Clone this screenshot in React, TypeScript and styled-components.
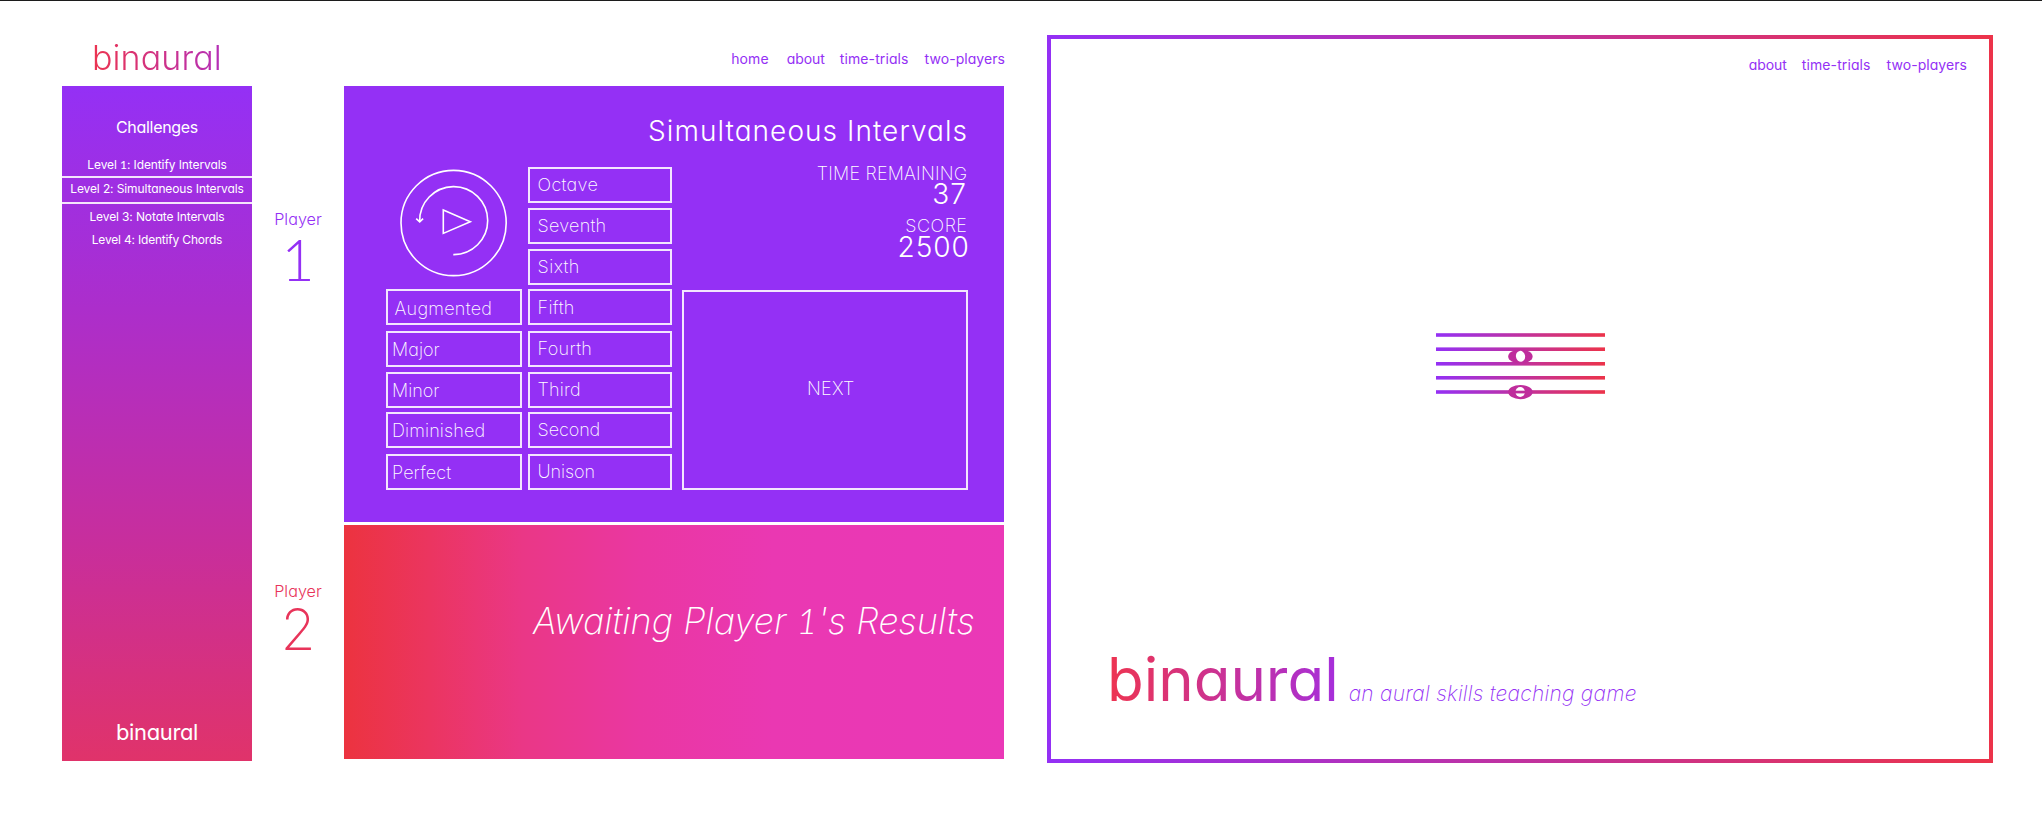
import React from "react";
import styled, { createGlobalStyle, css } from "styled-components";

const violet = "#9430f5";
const red = "#ec334a";
const line = "rgba(255, 255, 255, 0.88)";

const GlobalStyle = createGlobalStyle`
  *, *::before, *::after { box-sizing: border-box; }
  body {
    margin: 0;
    background: #fff;
    font-family: Inter, "Open Sans", sans-serif;
    font-feature-settings: "cv11";
  }
  button { font: inherit; color: inherit; background: none; margin: 0; }
`;

const Page = styled.div`
  display: flex;
  align-items: flex-start;
  width: 2042px;
  height: 822px;
  border-top: 1px solid #1c1c1c;
  padding: 34px 49px 0 62px;
  overflow: hidden;
`;

/* text */

interface TypeProps {
  $size: number;
  $line: number;
  $weight?: number;
  $track?: number;
}

const type = css<TypeProps>`
  font-size: ${(p) => p.$size}px;
  line-height: ${(p) => p.$line}px;
  font-weight: ${(p) => p.$weight ?? 400};
  letter-spacing: ${(p) => p.$track ?? 0}px;
  white-space: nowrap;
`;

const gradientText = css`
  background-clip: text;
  -webkit-background-clip: text;
  color: transparent;
`;

/* a lighter face whose "1" has a foot */
const FootedOne = styled.span`
  font-family: Lato, sans-serif;
  font-weight: ${(p: { $weight?: number }) => p.$weight ?? 300};
  line-height: 1;
`;

/* game screen */

const Game = styled.section`
  display: flex;
  width: 943px;
`;

const Side = styled.div`
  width: 190px;
  padding-top: 3px;
`;

const Logo = styled.h1<TypeProps>`
  ${type}
  margin: 0 0 8px 30px;
  width: fit-content;
  background-image: linear-gradient(90deg, #ec3450, #b42fb8);
  ${gradientText}
`;

const Sidebar = styled.aside`
  display: flex;
  flex-direction: column;
  height: 675px;
  padding: 31px 0 16px;
  color: #fff;
  text-align: center;
  background: linear-gradient(180deg, ${violet} 0%, #ac2ecb 33%, #c82e9c 68%, #e0336a 100%);
`;

const SidebarTitle = styled.h2<TypeProps>`
  ${type}
  margin: 0 0 20px;
`;

const Levels = styled.ul`
  list-style: none;
  margin: 0;
  padding: 0;
`;

const Level = styled.li<{ $active?: boolean; $track: number }>`
  font-size: 12px;
  line-height: 15px;
  letter-spacing: ${(p) => p.$track}px;
  white-space: nowrap;
  padding: 0 0 8px;
  ${(p) =>
    p.$active &&
    css`
      border: solid ${line};
      border-width: 2px 0;
      margin: -4px 0 5px;
      padding: 3px 0 6px;
    `}
`;

const SidebarBrand = styled.div<TypeProps>`
  ${type}
  margin-top: auto;
`;

const Players = styled.div`
  display: flex;
  flex-direction: column;
  align-items: center;
  width: 92px;
  padding-top: 174px;
`;

const Player = styled.div<{ $color: string; $gap: number }>`
  display: flex;
  flex-direction: column;
  align-items: center;
  height: 372px;
  color: ${(p) => p.$color};
  gap: ${(p) => p.$gap}px;
`;

const PlayerLabel = styled.span<TypeProps>`
  ${type}
`;

const PlayerNumber = styled.span<{ $face: string; $weight: number }>`
  font-family: ${(p) => p.$face}, sans-serif;
  font-size: 57px;
  line-height: 52px;
  font-weight: ${(p) => p.$weight};
`;

const Main = styled.main`
  width: 660px;
  padding-top: 15px;
`;

const Nav = styled.nav<{ $outset?: number }>`
  display: flex;
  justify-content: flex-end;
  margin-right: ${(p) => -(p.$outset ?? 0)}px;
  color: ${violet};
`;

const NavLink = styled.a<{ $before: number; $track: number }>`
  font-size: 14px;
  line-height: 17px;
  font-weight: 400;
  letter-spacing: ${(p) => p.$track}px;
  margin-left: ${(p) => p.$before}px;
`;

const Board = styled.div`
  height: 436px;
  margin-top: 19px;
  padding: 28px 36px 0 42px;
  color: #fff;
  background: ${violet};
`;

const BoardTitle = styled.h2<TypeProps>`
  ${type}
  margin: 0;
  text-align: right;
`;

const Columns = styled.div`
  display: flex;
  align-items: flex-start;
  margin-top: 19px;
`;

const Column = styled.div<{ $width: number; $after: number }>`
  display: flex;
  flex-direction: column;
  width: ${(p) => p.$width}px;
  margin-right: ${(p) => p.$after}px;
`;

const Replay = styled.svg`
  display: block;
  width: 136px;
  height: 122px;
  fill: none;
  stroke: #fff;
  stroke-width: 1.6;
`;

const Choice = styled.button<{ $after: number; $inset: number; $drop: number; $track: number }>`
  display: flex;
  align-items: flex-start;
  height: 36px;
  margin-bottom: ${(p) => p.$after}px;
  padding: ${(p) => p.$drop}px 0 0 ${(p) => p.$inset}px;
  border: 2px solid ${line};
  font-size: 18px;
  line-height: 21px;
  font-weight: 200;
  letter-spacing: ${(p) => p.$track}px;
`;

const Stats = styled.div`
  display: flex;
  flex-direction: column;
  align-items: flex-end;
  height: 127px;
  margin-top: -4px;
`;

const Stat = styled.span<TypeProps & { $shift: number; $above?: number }>`
  ${type}
  margin-right: ${(p) => p.$shift}px;
  margin-top: ${(p) => p.$above ?? 0}px;
`;

const Next = styled.button<TypeProps>`
  ${type}
  height: 200px;
  width: 286px;
  display: flex;
  border: 2px solid ${line};
  padding: 86px 0 0 123px;
`;

const Waiting = styled.div<TypeProps>`
  ${type}
  width: 660px;
  height: 234px;
  margin-top: 3px;
  padding: 74px 0 0 189px;
  color: #fff;
  font-style: italic;
  background: linear-gradient(90deg, #ec333f 0%, #eb3560 13%, #ea3786 27%, #ea37a2 45%, #ea38b2 65%, #ea38b7 100%);
`;

/* title screen */

const Splash = styled.section`
  display: flex;
  flex-direction: column;
  width: 946px;
  height: 728px;
  margin-left: 42px;
  border: 4px solid;
  border-image: linear-gradient(90deg, ${violet}, ${red}) 1;
  padding: 17px 22px 0 56px;
`;

const Staff = styled.svg`
  display: block;
  width: 169px;
  height: 70px;
  margin: 258px 0 242px 329px;
`;

const Brand = styled.div`
  display: flex;
  align-items: baseline;
`;

const BrandName = styled.h1<TypeProps>`
  ${type}
  margin: 0 10px 0 0;
  background-image: linear-gradient(90deg, #ee3450, #a52fdc);
  ${gradientText}
`;

const Tagline = styled.p<TypeProps>`
  ${type}
  margin: 0;
  font-style: italic;
  color: ${violet};
`;

const intervals = [
  { name: "Octave", after: 5, track: 0.3, drop: 5 },
  { name: "Seventh", after: 5, track: 0.25, drop: 5 },
  { name: "Sixth", after: 4, track: 0.4, drop: 5 },
  { name: "Fifth", after: 6, track: 0.3, drop: 6 },
  { name: "Fourth", after: 5, track: 0.3, drop: 5 },
  { name: "Third", after: 4, track: 0.15, drop: 5 },
  { name: "Second", after: 6, track: -0.1, drop: 5 },
  { name: "Unison", after: 0, track: -0.1, drop: 5 },
];

const qualities = [
  { name: "Augmented", after: 6, track: 0.26, inset: 6.5, drop: 7 },
  { name: "Major", after: 5, track: 0.05, inset: 4, drop: 6 },
  { name: "Minor", after: 4, track: 0, inset: 4, drop: 6 },
  { name: "Diminished", after: 6, track: 0.13, inset: 4, drop: 6 },
  { name: "Perfect", after: 0, track: 0.12, inset: 4, drop: 6 },
];

const staffLines = [2.2, 16.4, 31, 45, 59.2];

function SharedLinks() {
  return (
    <>
      <NavLink $before={18} $track={-0.05}>about</NavLink>
      <NavLink $before={15} $track={0.1}>time-trials</NavLink>
      <NavLink $before={16} $track={0.06}>two-players</NavLink>
    </>
  );
}

export default function App() {
  return (
    <Page>
      <GlobalStyle />
      <Game>
        <Side>
          <Logo $size={34} $line={40} $weight={300} $track={0.1}>binaural</Logo>
          <Sidebar>
            <SidebarTitle $size={16} $line={20} $track={-0.3}>Challenges</SidebarTitle>
            <Levels>
              <Level $track={-0.1}>
                Level <FootedOne $weight={400}>1</FootedOne>: Identify Intervals
              </Level>
              <Level $active $track={-0.11}>Level 2: Simultaneous Intervals</Level>
              <Level $track={-0.12}>Level 3: Notate Intervals</Level>
              <Level $track={-0.19}>Level 4: Identify Chords</Level>
            </Levels>
            <SidebarBrand $size={22} $line={26} $weight={400} $track={-0.35}>binaural</SidebarBrand>
          </Sidebar>
        </Side>

        <Players>
          <Player $color={violet} $gap={4}>
            <PlayerLabel $size={16.2} $line={20} $weight={300}>Player</PlayerLabel>
            <PlayerNumber $face="Lato" $weight={300}>1</PlayerNumber>
          </Player>
          <Player $color="#e8345a" $gap={3}>
            <PlayerLabel $size={16.2} $line={20} $weight={300}>Player</PlayerLabel>
            <PlayerNumber $face="Inter" $weight={200}>2</PlayerNumber>
          </Player>
        </Players>

        <Main>
          <Nav $outset={1}>
            <NavLink $before={0} $track={0.1}>home</NavLink>
            <SharedLinks />
          </Nav>
          <Board>
            <BoardTitle $size={28} $line={34} $weight={300} $track={1.05}>Simultaneous Intervals</BoardTitle>
            <Columns>
              <Column $width={136} $after={6}>
                <Replay viewBox="0 0 136 122">
                  <circle cx="67.6" cy="56" r="52.6" />
                  <path d="M67.3 87.6A34 34 0 1 0 33.7 54.5" />
                  <path d="M30.2 51.6l3.5 3.2 3.4-3.2" />
                  <path d="M57.3 43v23.4l27-11.7z" />
                </Replay>
                {qualities.map((q) => (
                  <Choice key={q.name} $after={q.after} $inset={q.inset} $drop={q.drop} $track={q.track}>
                    {q.name}
                  </Choice>
                ))}
              </Column>
              <Column $width={144} $after={10}>
                {intervals.map((i) => (
                  <Choice key={i.name} $after={i.after} $inset={7.6} $drop={i.drop} $track={i.track}>
                    {i.name}
                  </Choice>
                ))}
              </Column>
              <Column $width={286} $after={0}>
                <Stats>
                  <Stat $size={18} $line={21} $weight={200} $track={0.2} $shift={0.8}>TIME REMAINING</Stat>
                  <Stat $size={28} $line={20} $weight={300} $track={1} $shift={1}>37</Stat>
                  <Stat $size={18} $line={21} $weight={200} $track={0.5} $shift={0.5} $above={11}>SCORE</Stat>
                  <Stat $size={28} $line={20} $weight={300} $track={0.9} $shift={-1.6} $above={1}>2500</Stat>
                </Stats>
                <Next $size={18} $line={21} $weight={200} $track={0.26}>NEXT</Next>
              </Column>
            </Columns>
          </Board>
          <Waiting $size={36} $line={44} $weight={200} $track={0.08}>
            Awaiting Player <FootedOne>1</FootedOne>'s Results
          </Waiting>
        </Main>
      </Game>

      <Splash>
        <Nav>
          <SharedLinks />
        </Nav>
        <Staff viewBox="0 0 169 70">
          <defs>
            <linearGradient id="staff" gradientUnits="userSpaceOnUse" x1="0" y1="0" x2="169" y2="0">
              <stop offset="0" stopColor={violet} />
              <stop offset="1" stopColor={red} />
            </linearGradient>
          </defs>
          <g fill="url(#staff)">
            {staffLines.map((y) => (
              <rect key={y} y={y} width="169" height="3.6" />
            ))}
          </g>
          <g fill="#bf2d9c">
            <ellipse cx="84.4" cy="25.5" rx="12.2" ry="7" />
            <ellipse cx="84.4" cy="61.1" rx="12.2" ry="7.1" />
          </g>
          <g fill="#fff">
            <ellipse cx="84.5" cy="25.3" rx="4.6" ry="5.5" transform="rotate(-10 84.5 25.3)" />
            <ellipse cx="84.2" cy="61" rx="4.7" ry="4.9" />
          </g>
          <rect x="79" y="59.7" width="10.6" height="2.7" fill="#bf2d9c" />
        </Staff>
        <Brand>
          <BrandName $size={60} $line={72} $weight={400} $track={-0.02}>binaural</BrandName>
          <Tagline $size={21} $line={25} $weight={200} $track={0.24}>an aural skills teaching game</Tagline>
        </Brand>
      </Splash>
    </Page>
  );
}
